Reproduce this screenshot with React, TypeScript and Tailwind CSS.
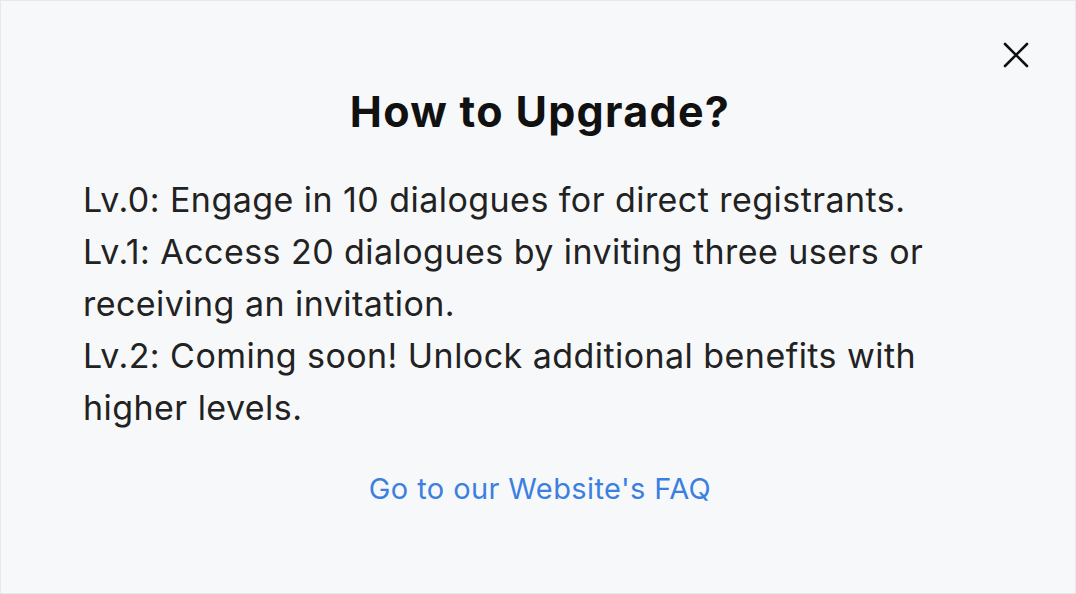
import React from "react";

export default function App() {
  return (
    <div
      className="relative w-[1076px] h-[594px] bg-[#f7f8fa] border border-[#e6e8eb] overflow-hidden"
      style={{ fontFamily: "Inter, 'Noto Sans', sans-serif" }}
    >
      <button className="absolute right-[45px] top-[40px] w-[28px] h-[28px] flex items-center justify-center text-[#111]">
        <svg width="28" height="28" viewBox="0 0 28 28" fill="none" stroke="currentColor" strokeWidth="2.6" strokeLinecap="round">
          <path d="M3 3 L25 25 M25 3 L3 25" />
        </svg>
      </button>
      <div className="flex flex-col pl-[82px] pr-[60px] pt-[82px]">
        <h1 className="text-center pr-[18px] text-[43px] leading-[56px] font-bold text-[#111] tracking-[1.3px]">
          How to Upgrade?
        </h1>
        <div className="mt-[35px] text-[34px] leading-[52px] text-[#222] tracking-[0.45px]">
          <p>Lv.0: Engage in 10 dialogues for direct registrants.</p>
          <p>Lv.1: Access 20 dialogues by inviting three users or receiving an invitation.</p>
          <p>Lv.2: Coming soon! Unlock additional benefits with higher levels.</p>
        </div>
        <div className="mt-[35px] pr-[18px] text-center text-[29px] leading-[40px] text-[#3b80e0] tracking-[0.4px]">
          Go to our Website's FAQ
        </div>
      </div>
    </div>
  );
}
